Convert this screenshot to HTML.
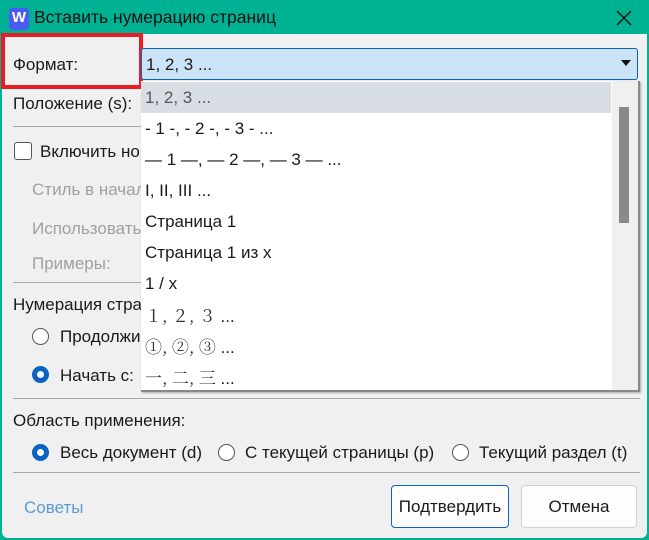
<!DOCTYPE html>
<html><head><meta charset="utf-8"><style>
*{margin:0;padding:0;box-sizing:border-box}
body{width:649px;height:540px;background:#00b294;font-family:"Liberation Sans",sans-serif;font-size:17px;color:#1a1a1a;position:relative;overflow:hidden}
.win{position:absolute;left:2px;top:34px;width:645px;height:504px;background:#f0f0f0;border-radius:0 0 6px 6px}
.a{position:absolute;white-space:nowrap}
.g{color:#a0a0a0}
.line{position:absolute;height:1px;background:#a8a8a8}
.radio{position:absolute;width:17px;height:17px;border-radius:50%;border:1px solid #555;background:#fff}
.radio.on{border:5px solid #0a62c2;background:#fff}
.item{position:absolute;left:0;width:470px;height:31px;line-height:31px;padding-left:4px;white-space:nowrap}
.cj{font-family:'Noto Serif CJK SC',serif}
</style></head><body>
<div class="a" style="left:9px;top:8px;width:20px;height:22px;background:#4a5cf0;border-radius:4px;color:#fff;font-weight:bold;font-size:15px;text-align:center;line-height:20px">W</div>
<div class="a" style="left:34px;top:7px;font-size:17.5px;color:#111">Вставить нумерацию страниц</div>
<svg class="a" style="left:615px;top:9px" width="18" height="18"><path d="M2 2L16 16M16 2L2 16" stroke="#111" stroke-width="1.5"/></svg>
<div class="win"></div>
<div class="a" style="left:1px;top:33px;width:142px;height:56px;border:4px solid #e81d25"></div>
<div class="a" style="left:13px;top:55px">Формат:</div>
<div class="a" style="left:141px;top:48px;width:497px;height:32px;background:#cce4f7;border:1px solid #0a62c2;border-radius:3px"></div>
<div class="a" style="left:146px;top:55px">1, 2, 3 ...</div>
<svg class="a" style="left:621px;top:60px" width="10" height="7"><path d="M0 0H10L5 6Z" fill="#111"/></svg>
<div class="a" style="left:13px;top:94px">Положение (s):</div>
<div class="line" style="left:13px;top:126px;width:128px"></div>
<div class="a" style="left:14px;top:142px;width:18px;height:18px;border:1px solid #555;border-radius:3px;background:#fff"></div>
<div class="a" style="left:40px;top:142px">Включить но</div>
<div class="a g" style="left:32px;top:180px">Стиль в начал</div>
<div class="a g" style="left:32px;top:219px">Использовать</div>
<div class="a g" style="left:32px;top:254px">Примеры:</div>
<div class="line" style="left:13px;top:282px;width:128px"></div>
<div class="a" style="left:13px;top:295px">Нумерация стра</div>
<div class="radio" style="left:32px;top:328px"></div>
<div class="a" style="left:60px;top:327px">Продолжи</div>
<div class="radio on" style="left:32px;top:366px"></div>
<div class="a" style="left:60px;top:366px">Начать с:</div>
<div class="line" style="left:13px;top:398px;width:627px"></div>
<div class="a" style="left:13px;top:411px">Область применения:</div>
<div class="radio on" style="left:32px;top:444px"></div>
<div class="a" style="left:60px;top:443px">Весь документ (d)</div>
<div class="radio" style="left:218px;top:444px"></div>
<div class="a" style="left:245px;top:443px">С текущей страницы (p)</div>
<div class="radio" style="left:452px;top:444px"></div>
<div class="a" style="left:479px;top:443px">Текущий раздел (t)</div>
<div class="line" style="left:13px;top:472px;width:627px"></div>
<div class="a" style="left:24px;top:498px;color:#5b9bd5">Советы</div>
<div class="a" style="left:391px;top:485px;width:118px;height:43px;border:1px solid #0a62c2;border-radius:4px;background:#fdfdfd;text-align:center;line-height:41px">Подтвердить</div>
<div class="a" style="left:521px;top:485px;width:116px;height:43px;border:1px solid #d0d0d0;border-radius:4px;background:#fdfdfd;text-align:center;line-height:41px">Отмена</div>
<div class="a" style="left:141px;top:81px;width:499px;height:311px;background:#fff;border-right:2px solid #888;border-bottom:2px solid #888;box-shadow:1px 1px 2px #aaa">
<div class="item" style="top:1px;background:#d9dde4;color:#555">1, 2, 3 ...</div>
<div class="item" style="top:32px">- 1 -, - 2 -, - 3 - ...</div>
<div class="item" style="top:63px">— 1 —, — 2 —, — 3 — ...</div>
<div class="item" style="top:94px">I, II, III ...</div>
<div class="item" style="top:125px">Страница 1</div>
<div class="item" style="top:156px">Страница 1 из x</div>
<div class="item" style="top:187px">1 / x</div>
<div class="item" style="top:218px"><span class="cj" style="color:#333">１, ２, ３</span> ...</div>
<div class="item" style="top:249px"><span class="cj" style="color:#333">①, ②, ③</span> ...</div>
<div class="item" style="top:280px"><span class="cj" style="color:#333">一, 二, 三</span> ...</div>
<div class="a" style="left:471px;top:0;width:26px;height:309px;background:#f0f0f0"></div>
<div class="a" style="left:478px;top:26px;width:10px;height:116px;background:#888"></div>
</div>
</body></html>
